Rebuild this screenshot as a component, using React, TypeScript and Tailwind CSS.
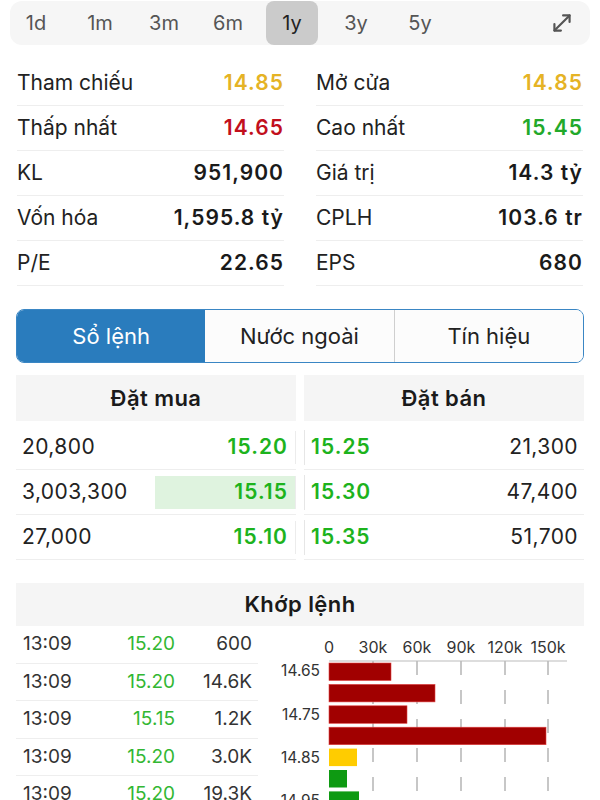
import React from "react";
import { MoveDiagonal } from "lucide-react";

const tabs = ["1d", "1m", "3m", "6m", "1y", "3y", "5y"];

const stats: [string, string, string, string, string, string][] = [
  ["Tham chiếu", "14.85", "text-[#e5b325]", "Mở cửa", "14.85", "text-[#e5b325]"],
  ["Thấp nhất", "14.65", "text-[#c20f1c]", "Cao nhất", "15.45", "text-[#22a92a]"],
  ["KL", "951,900", "text-[#1a1a1a]", "Giá trị", "14.3 tỷ", "text-[#1a1a1a]"],
  ["Vốn hóa", "1,595.8 tỷ", "text-[#1a1a1a]", "CPLH", "103.6 tr", "text-[#1a1a1a]"],
  ["P/E", "22.65", "text-[#1a1a1a]", "EPS", "680", "text-[#1a1a1a]"],
];

const book = [
  ["20,800", "15.20", "15.25", "21,300", false],
  ["3,003,300", "15.15", "15.30", "47,400", true],
  ["27,000", "15.10", "15.35", "51,700", false],
] as const;

const trades = [
  ["13:09", "15.20", "600"],
  ["13:09", "15.20", "14.6K"],
  ["13:09", "15.15", "1.2K"],
  ["13:09", "15.20", "3.0K"],
  ["13:09", "15.20", "19.3K"],
];

const bars = [
  { w: 62, c: "#a10000" },
  { w: 106, c: "#a10000" },
  { w: 78, c: "#a10000" },
  { w: 217, c: "#a10000" },
  { w: 28, c: "#ffcc00" },
  { w: 18, c: "#0e9a12" },
  { w: 30, c: "#0e9a12" },
];

function Chart() {
  const x0 = 71;
  const ticks = [
    { x: 71, l: "0" },
    { x: 115, l: "30k" },
    { x: 159, l: "60k" },
    { x: 203, l: "90k" },
    { x: 247, l: "120k" },
    { x: 290, l: "150k" },
  ];
  const ylabels = [
    { y: 45, l: "14.65" },
    { y: 89, l: "14.75" },
    { y: 132, l: "14.85" },
    { y: 175, l: "14.95" },
  ];
  return (
    <svg width="330" height="180" viewBox="0 0 330 180" className="block" style={{ fontFamily: "Inter, sans-serif" }}>
      {ticks.map((t) => (
        <text key={t.l} x={t.x} y={27} fontSize="16" fill="#333" textAnchor="middle">
          {t.l}
        </text>
      ))}
      {ticks.slice(1).map((t) => (
        <line key={"g" + t.l} x1={t.x} x2={t.x} y1={35} y2={180} stroke="#aaa" strokeWidth="1.3" strokeDasharray="14 15" />
      ))}
      <line x1={x0} x2={309} y1={35} y2={35} stroke="#bbb" strokeWidth="1" />
      {bars.map((b, i) => (
        <rect key={i} x={x0} y={37 + i * 21.4} width={b.w} height={17.5} fill={b.c} stroke={b.c === "#a10000" ? "#e04040" : "none"} strokeWidth="0.6" />
      ))}
      {ylabels.map((l) => (
        <text key={l.l} x={62} y={l.y + 5} fontSize="15.5" fill="#333" textAnchor="end">
          {l.l}
        </text>
      ))}
    </svg>
  );
}

export default function App() {
  return (
    <div className="w-[600px] h-[800px] overflow-hidden bg-white text-[#222]" style={{ fontFamily: "Inter, 'Noto Sans', sans-serif" }}>
      {/* period tabs */}
      <div className="mx-[10px] mt-[1px] h-[44px] rounded-xl bg-[#f6f6f6] flex items-center">
        <div className="flex gap-[12px]">
          {tabs.map((t) => (
            <div
              key={t}
              className={
                "w-[52px] h-[44px] flex items-center justify-center rounded-lg text-[20px] " +
                (t === "1y" ? "bg-[#cbcbcb] text-[#222]" : "text-[#555]")
              }
            >
              {t}
            </div>
          ))}
        </div>
        <div className="ml-auto mr-[15px] text-[#555]">
          <MoveDiagonal size={26} strokeWidth={2} />
        </div>
      </div>

      {/* stats */}
      <div className="mt-[16px] px-[17px] grid grid-cols-2 gap-x-[32px]">
        {stats.map((r, i) => (
          <React.Fragment key={i}>
            <div className="h-[45px] flex items-center justify-between border-b border-[#eeeeee] text-[21px]">
              <span className="text-[#222]">{r[0]}</span>
              <span className={"font-semibold tracking-[0.05em] " + r[2]}>{r[1]}</span>
            </div>
            <div className="h-[45px] flex items-center justify-between border-b border-[#eeeeee] text-[21px]">
              <span className="text-[#222]">{r[3]}</span>
              <span className={"font-semibold tracking-[0.05em] " + r[5]}>{r[4]}</span>
            </div>
          </React.Fragment>
        ))}
      </div>

      {/* segmented */}
      <div className="mx-[16px] mt-[23px] h-[54px] rounded-lg border-[1.5px] border-[#3a86c4] flex overflow-hidden text-[22px]">
        <div className="flex-1 flex items-center justify-center bg-[#2a7cbd] text-white">Sổ lệnh</div>
        <div className="flex-1 flex items-center justify-center bg-[#fcfcfc] text-[#222] border-r border-[#cfcfcf]">Nước ngoài</div>
        <div className="flex-1 flex items-center justify-center bg-[#fcfcfc] text-[#222]">Tín hiệu</div>
      </div>

      {/* order book */}
      <div className="mx-[16px] mt-[12px] grid grid-cols-[280px_280px] gap-x-[8px]">
        <div className="h-[46px] bg-[#f5f5f5] flex items-center justify-center text-[22px] font-semibold tracking-[0.02em] text-[#1a1a1a]">Đặt mua</div>
        <div className="h-[46px] bg-[#f5f5f5] flex items-center justify-center text-[22px] font-semibold tracking-[0.02em] text-[#1a1a1a]">Đặt bán</div>
      </div>
      <div className="mx-[16px] mt-[4px] grid grid-cols-[280px_280px] gap-x-[8px]">
        {book.map((r, i) => (
          <React.Fragment key={i}>
            <div className="h-[45px] border-b border-[#eeeeee] flex items-center text-[21px] relative">
              <div className="pl-[6px] text-[#222] tracking-[0.02em]">{r[0]}</div>
              <div
                className={
                  "ml-auto h-[33px] w-[141px] flex items-center justify-end pr-[7px] font-semibold tracking-[0.05em] text-[#1db31d] border-r border-[#ececec] " +
                  (r[4] ? "bg-[#dff3df]" : "")
                }
              >
                {r[1]}
              </div>
            </div>
            <div className="h-[45px] border-b border-[#eeeeee] flex items-center text-[21px]">
              <div className="h-[35px] flex items-center pl-[6px] border-l border-[#e6e6e6] font-semibold tracking-[0.05em] text-[#1db31d]">{r[2]}</div>
              <div className="ml-auto pr-[6px] text-[#222] tracking-[0.02em]">{r[3]}</div>
            </div>
          </React.Fragment>
        ))}
      </div>

      {/* matched */}
      <div className="mx-[16px] mt-[23px] h-[43px] bg-[#f5f5f5] flex items-center justify-center text-[22px] font-semibold tracking-[0.02em] text-[#1a1a1a]">
        Khớp lệnh
      </div>
      <div className="ml-[16px] flex">
        <div className="w-[242px]">
          {trades.map((t, i) => (
            <div key={i} className="h-[37.5px] border-b border-[#eeeeee] flex items-center text-[19px]">
              <div className="pl-[7px] w-[70px] text-[#333]">{t[0]}</div>
              <div className="w-[89px] text-right text-[#33b733]">{t[1]}</div>
              <div className="flex-1 text-right pr-[6px] text-[#333]">{t[2]}</div>
            </div>
          ))}
        </div>
        <Chart />
      </div>
    </div>
  );
}
